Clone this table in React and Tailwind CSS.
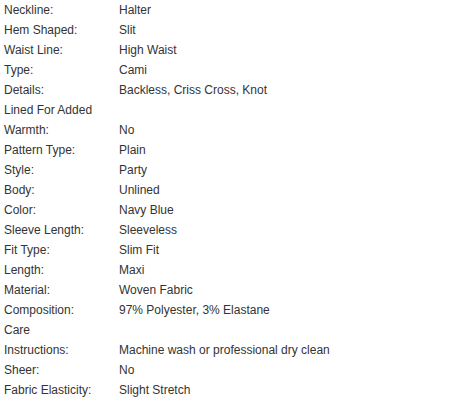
const specs = [
  ['Neckline:', 'Halter'],
  ['Hem Shaped:', 'Slit'],
  ['Waist Line:', 'High Waist'],
  ['Type:', 'Cami'],
  ['Details:', 'Backless, Criss Cross, Knot'],
  ['Lined For Added Warmth:', 'No'],
  ['Pattern Type:', 'Plain'],
  ['Style:', 'Party'],
  ['Body:', 'Unlined'],
  ['Color:', 'Navy Blue'],
  ['Sleeve Length:', 'Sleeveless'],
  ['Fit Type:', 'Slim Fit'],
  ['Length:', 'Maxi'],
  ['Material:', 'Woven Fabric'],
  ['Composition:', '97% Polyester, 3% Elastane'],
  ['Care Instructions:', 'Machine wash or professional dry clean'],
  ['Sheer:', 'No'],
  ['Fabric Elasticity:', 'Slight Stretch'],
];

export default function App() {
  return (
    <div className="w-[458px] h-[400px] bg-white text-[#333] text-[12px] leading-[20px] font-['Liberation_Sans',Arial,sans-serif]">
      {specs.map(([label, value]) => (
        <div key={label} className="flex items-end pl-[4px]">
          <div className="w-[91px] shrink-0 mr-[24px]">{label}</div>
          <div className="flex-1">{value}</div>
        </div>
      ))}
    </div>
  );
}
